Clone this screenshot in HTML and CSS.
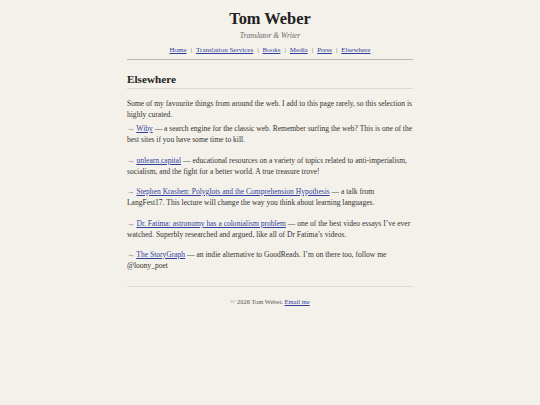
FILE: index.html
```html
<!DOCTYPE html>
<html lang="en">
<head>
<meta charset="utf-8">
<title>Elsewhere — Tom Weber</title>
<link rel="stylesheet" href="styles.css">
</head>
<body>
<div class="page">
  <header class="site-header">
    <h1 class="site-title">Tom Weber</h1>
    <p class="tagline">Translator &amp; Writer</p>
    <nav class="nav">
      <a href="#">Home</a><span class="sep">|</span><a href="#">Translation Services</a><span class="sep">|</span><a href="#">Books</a><span class="sep">|</span><a href="#">Media</a><span class="sep">|</span><a href="#">Press</a><span class="sep">|</span><a href="#">Elsewhere</a>
    </nav>
  </header>
  <main class="content">
    <h2 class="page-title">Elsewhere</h2>
    <p class="intro">Some of my favourite things from around the web. I add to this page rarely, so this selection is highly curated.</p>
    <p class="item"><span class="arrow">→</span> <a href="#">Wiby</a> — a search engine for the classic web. Remember surfing the web? This is one of the best sites if you have some time to kill.</p>
    <p class="item"><span class="arrow">→</span> <a href="#">unlearn.capital</a> — educational resources on a variety of topics related to anti-imperialism, socialism, and the fight for a better world. A true treasure trove!</p>
    <p class="item"><span class="arrow">→</span> <a href="#">Stephen Krashen: Polyglots and the Comprehension Hypothesis</a> — a talk from LangFest17. This lecture will change the way you think about learning languages.</p>
    <p class="item"><span class="arrow">→</span> <a href="#">Dr. Fatima: astronomy has a colonialism problem</a> — one of the best video essays I’ve ever watched. Superbly researched and argued, like all of Dr Fatima’s videos.</p>
    <p class="item"><span class="arrow">→</span> <a href="#">The StoryGraph</a> — an indie alternative to GoodReads. I’m on there too, follow me @loony_poet</p>
  </main>
  <footer class="site-footer">
    © 2026 Tom Weber. <a href="#">Email me</a>
  </footer>
</div>
</body>
</html>
```
FILE: styles.css
```css
html, body {
  margin: 0;
  padding: 0;
  background: #f4f1ea;
}
body {
  font-family: Georgia, "Liberation Serif", serif;
  color: #333;
  font-size: 7.55px;
  line-height: 11px;
}
.page {
  width: 286px;
  margin: 0 auto;
  padding-top: 9px;
}
.site-header {
  text-align: center;
  border-bottom: 1.5px solid #b8b6b0;
  padding-bottom: 3px;
}
.site-title {
  font-size: 16.4px;
  line-height: 20px;
  margin: 0;
  color: #222;
  font-weight: bold;
}
.tagline {
  font-style: italic;
  font-size: 7.5px;
  color: #666;
  margin: 1px 0 4px;
}
.nav {
  font-size: 7px;
}
.sep {
  color: #666;
  margin: 0 4px;
}
a {
  color: #2f3f9e;
}
.content {
  padding-top: 12px;
  padding-bottom: 15px;
  border-bottom: 1px solid #dcdad4;
}
.page-title {
  font-size: 11.2px;
  line-height: 14px;
  margin: 0 0 9px;
  padding-bottom: 2px;
  border-bottom: 1px solid #dcdad4;
  color: #222;
}
.intro {
  margin: 0 0 3px;
}
.item {
  margin: 0 0 9.5px;
}
.item:last-child {
  margin-bottom: 0;
}
.arrow {
  color: #888;
}
.site-footer {
  text-align: center;
  color: #555;
  padding-top: 9px;
  font-size: 6.5px;
}
```
